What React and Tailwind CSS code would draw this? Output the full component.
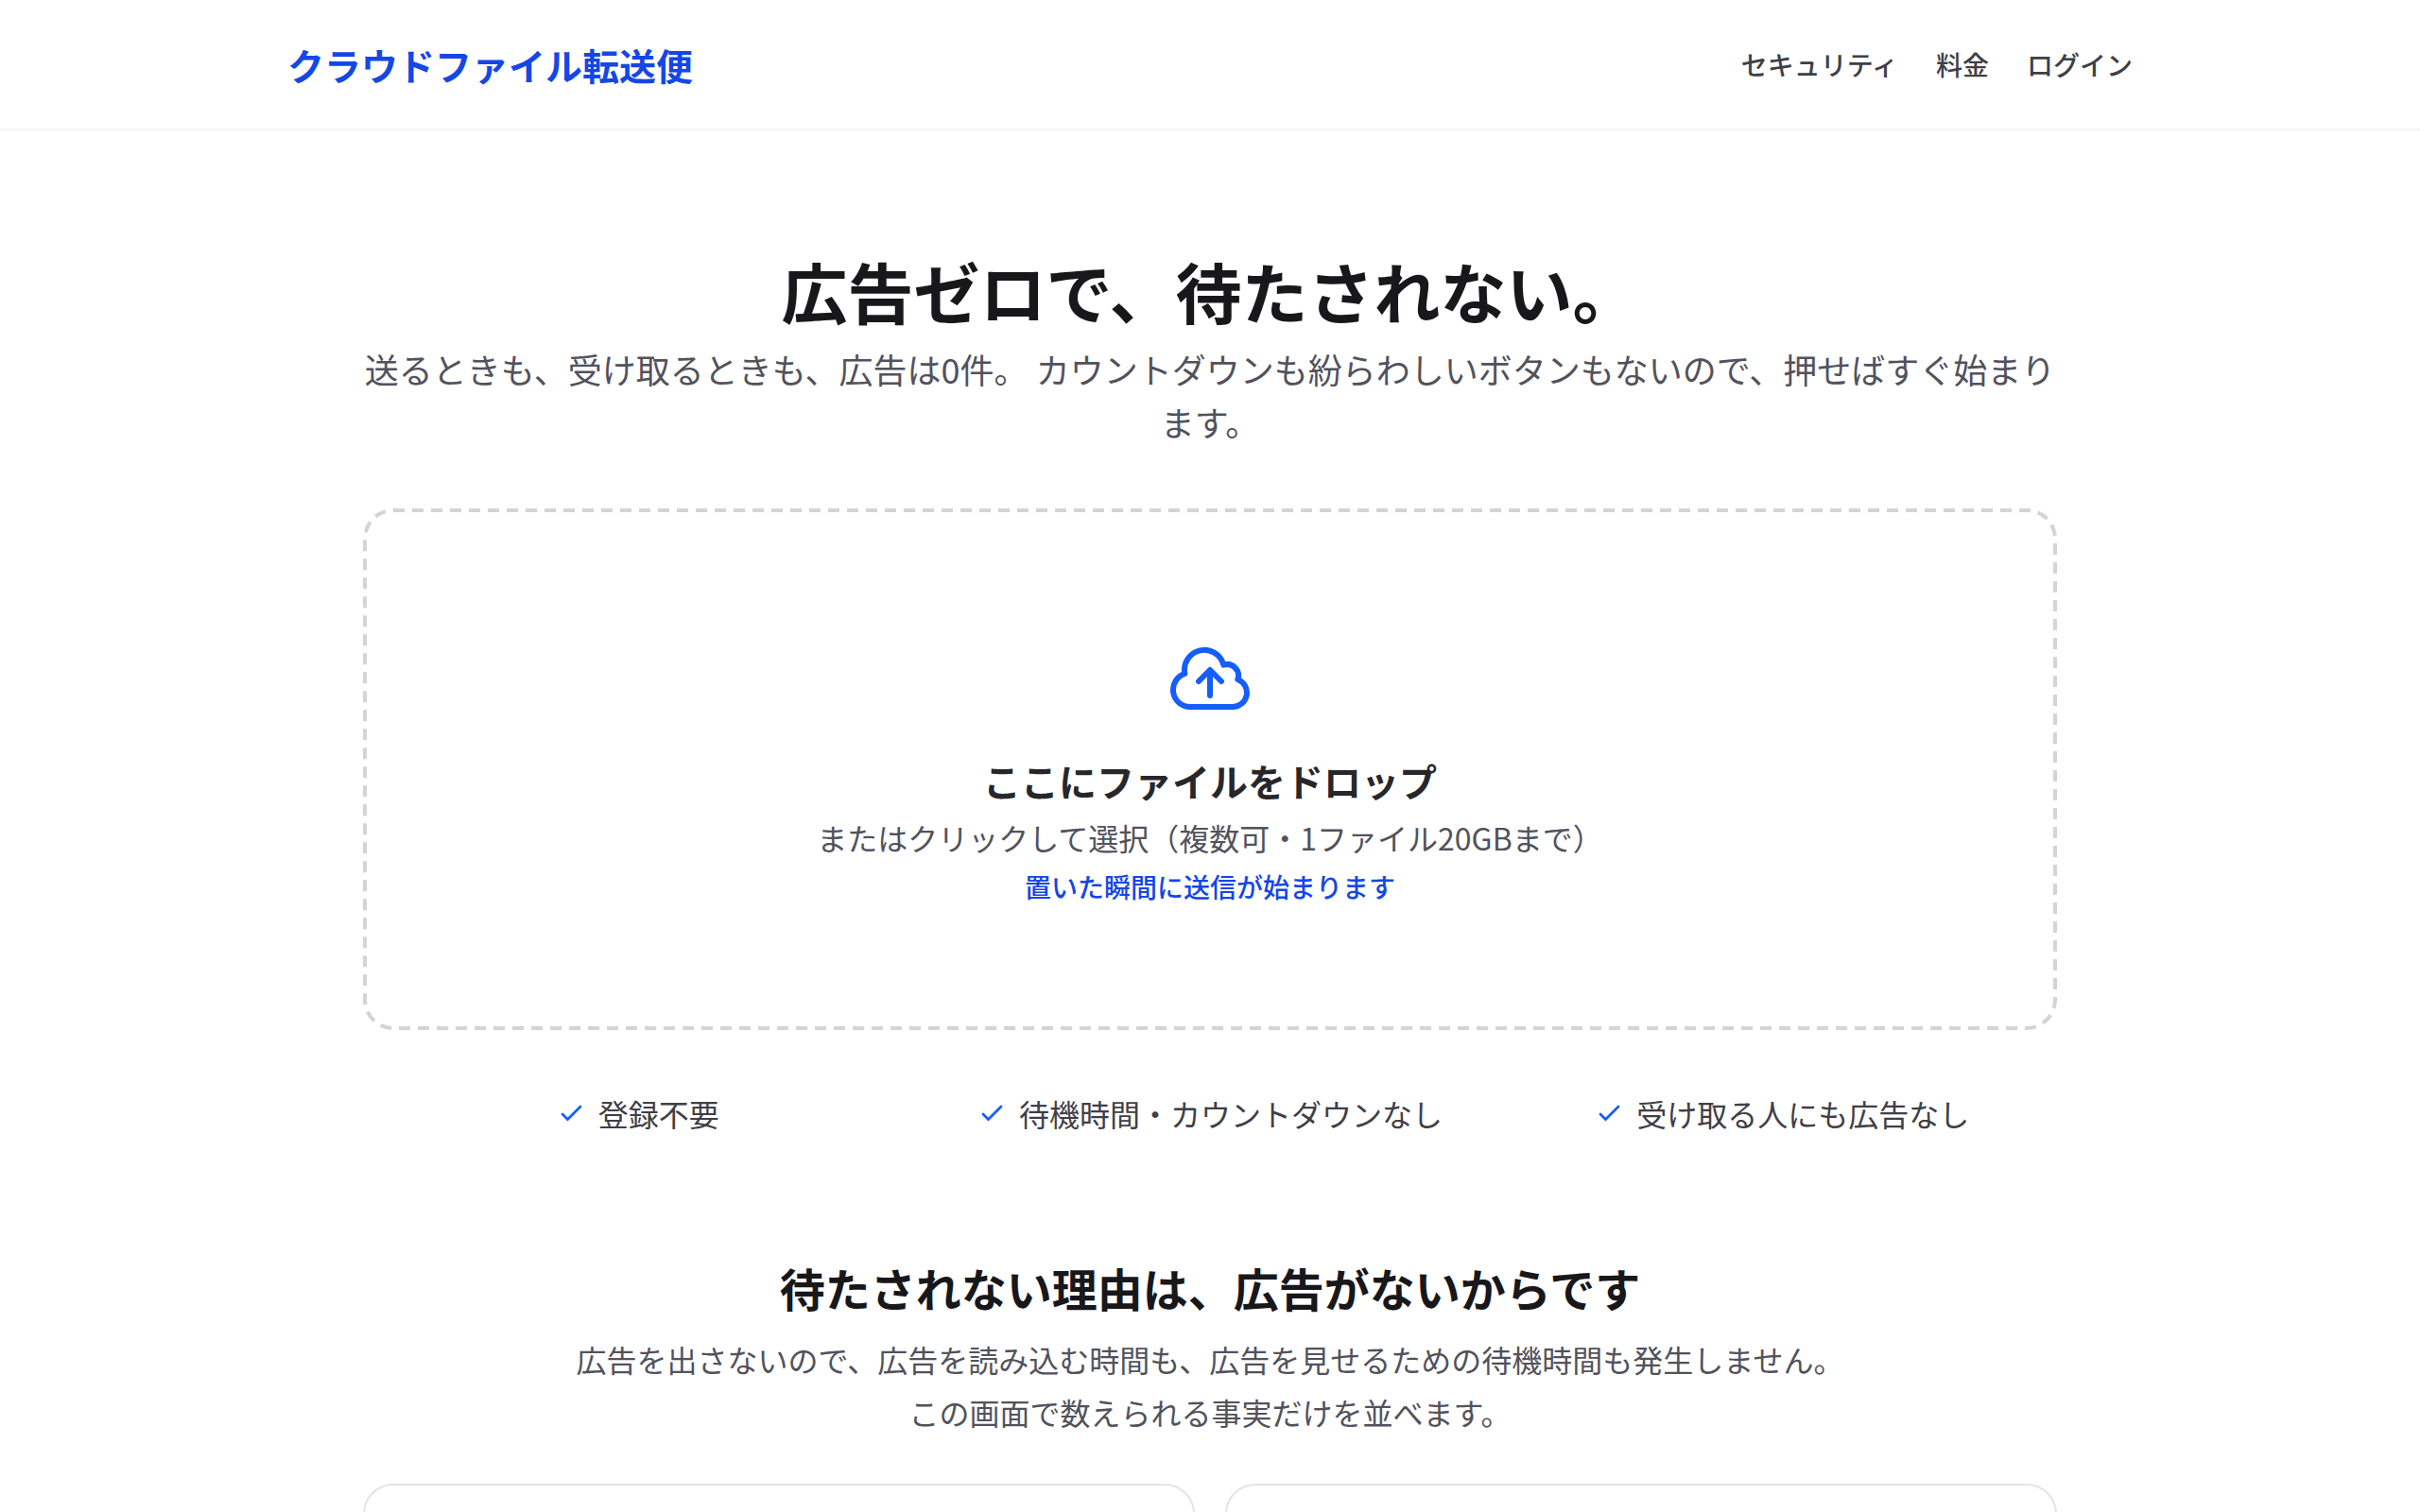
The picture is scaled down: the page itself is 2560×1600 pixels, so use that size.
import React from "react";

const navLinks = [
  { label: "セキュリティ", href: "#security" },
  { label: "料金", href: "#pricing" },
  { label: "ログイン", href: "#login" },
];

const points = ["登録不要", "待機時間・カウントダウンなし", "受け取る人にも広告なし"];

function CloudUploadIcon() {
  return (
    <svg
      viewBox="0 0 24 24"
      fill="none"
      stroke="currentColor"
      strokeWidth="1.5"
      strokeLinecap="round"
      strokeLinejoin="round"
      aria-hidden="true"
      className="size-24 text-blue-600"
    >
      <path d="M12 16.5V9.75m0 0 3 3m-3-3-3 3M6.75 19.5a4.5 4.5 0 0 1-1.41-8.775 5.25 5.25 0 0 1 10.233-2.33 3 3 0 0 1 3.758 3.848A3.752 3.752 0 0 1 18 19.5H6.75Z" />
    </svg>
  );
}

function CheckIcon() {
  return (
    <svg
      viewBox="0 0 28 28"
      fill="none"
      stroke="currentColor"
      strokeWidth="2.75"
      strokeLinecap="round"
      aria-hidden="true"
      className="size-7 shrink-0 text-blue-600"
    >
      <path d="M6 15l5.5 5.5L25 7" />
    </svg>
  );
}

/* Dashed outline with long dashes, drawn along the centre of a 4px edge. */
function DashedOutline() {
  return (
    <svg
      aria-hidden="true"
      className="pointer-events-none absolute -inset-0.5 size-[calc(100%+4px)] overflow-visible text-zinc-300"
    >
      <rect
        width="100%"
        height="100%"
        rx="30"
        fill="none"
        stroke="currentColor"
        strokeWidth="4"
        strokeDasharray="12 8"
      />
    </svg>
  );
}

function Header() {
  return (
    <header className="border-b-2 border-zinc-100">
      <div className="mx-auto flex max-w-[2048px] items-center justify-between px-12 py-10">
        <a href="#top" className="text-[39px] leading-14 font-bold text-blue-700">
          クラウドファイル転送便
        </a>
        <nav className="flex gap-10 text-[28px] leading-10 font-medium text-zinc-700">
          {navLinks.map((link) => (
            <a key={link.href} href={link.href}>
              {link.label}
            </a>
          ))}
        </nav>
      </div>
    </header>
  );
}

function DropZone() {
  return (
    <button
      type="button"
      className="relative mt-16 flex w-full flex-col items-center rounded-[32px] border-4 border-transparent px-12 py-32"
    >
      <DashedOutline />
      <CloudUploadIcon />
      <span className="mt-8 text-[40px] leading-14 font-semibold text-zinc-800">
        ここにファイルをドロップ
      </span>
      <span className="mt-2 text-[32px] leading-12 text-zinc-600">
        またはクリックして選択（複数可・1ファイル20GBまで）
      </span>
      <span className="mt-2 text-[28px] leading-10 font-medium text-blue-700">
        置いた瞬間に送信が始まります
      </span>
    </button>
  );
}

export default function App() {
  return (
    <div
      id="top"
      lang="ja"
      className="h-screen overflow-hidden bg-white font-['Noto_Sans_CJK_JP',sans-serif] text-zinc-900"
    >
      <Header />
      <main className="mx-auto max-w-[1792px] pt-32 pb-32">
        <h1 className="text-center text-[70px] leading-21 font-bold">
          広告ゼロで、待たされない。
        </h1>
        <p className="mt-3 text-center text-4xl leading-14 text-zinc-600">
          送るときも、受け取るときも、広告は0件。 カウントダウンも紛らわしいボタンもないので、押せばすぐ始まります。
        </p>
        <DropZone />
        <ul className="mt-16 grid grid-cols-3 gap-6 text-[32px] leading-12 text-zinc-700">
          {points.map((point) => (
            <li key={point} className="flex items-center justify-center gap-4">
              <CheckIcon />
              {point}
            </li>
          ))}
        </ul>
        <section className="mt-32">
          <h2 className="text-center text-5xl leading-16 font-bold">
            待たされない理由は、広告がないからです
          </h2>
          <p className="mt-4 text-center text-[32px] leading-14 text-zinc-600">
            広告を出さないので、広告を読み込む時間も、広告を見せるための待機時間も発生しません。
            <br />
            この画面で数えられる事実だけを並べます。
          </p>
          <div className="mt-12 grid grid-cols-2 gap-8">
            <div className="h-64 rounded-[32px] border-2 border-zinc-200" />
            <div className="h-64 rounded-[32px] border-2 border-zinc-200" />
          </div>
        </section>
      </main>
    </div>
  );
}
